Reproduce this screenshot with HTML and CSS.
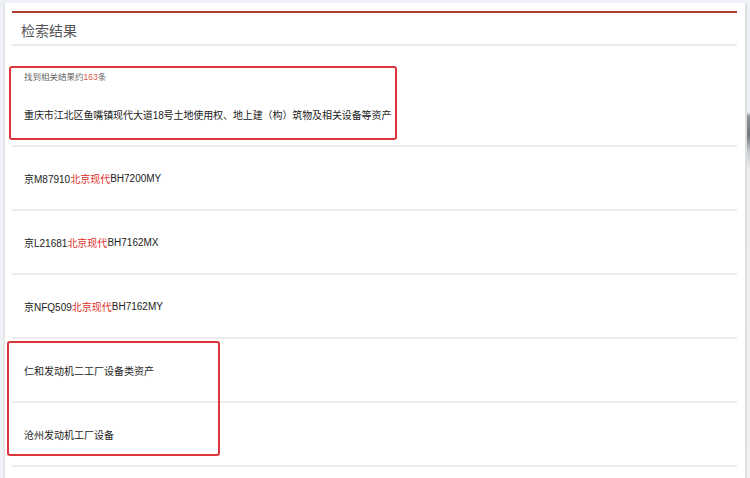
FILE: index.html
```html
<!DOCTYPE html>
<html lang="zh-CN">
<head>
<meta charset="utf-8">
<title>检索结果</title>
<link rel="stylesheet" href="styles.css">
</head>
<body>
<div class="page">
  <div class="panel">
    <div class="accent"></div>
    <div class="header">检索结果</div>
    <div class="summary">
      <div class="count">找到相关结果约<span class="num">163</span>条</div>
      <div class="item-text">重庆市江北区鱼嘴镇现代大道18号土地使用权、地上建（构）筑物及相关设备等资产</div>
    </div>
    <div class="row">京M87910<span class="hl">北京现代</span>BH7200MY</div>
    <div class="row">京L21681<span class="hl">北京现代</span>BH7162MX</div>
    <div class="row">京NFQ509<span class="hl">北京现代</span>BH7162MY</div>
    <div class="row">仁和发动机二工厂设备类资产</div>
    <div class="row">沧州发动机工厂设备</div>
    <div class="mark mark-one"></div>
    <div class="mark mark-two"></div>
  </div>
</div>
</body>
</html>
```
FILE: styles.css
```css
html, body {
  margin: 0;
  padding: 0;
}
body {
  width: 750px;
  height: 478px;
  overflow: hidden;
  font-family: "Liberation Sans", "Noto Sans CJK SC", sans-serif;
  color: #222;
  background:
    linear-gradient(to bottom, #eef2f7 0, #eef2f7 112px, #8d949c 116px, #6f767e 135px, #c9cdd2 152px, #eeeeee 170px, #f3f3f3 100%) right top / 3px 100% no-repeat,
    #eef2f6;
}
.page {
  padding-top: 3px;
  padding-left: 3px;
  display: flex;
}
.panel {
  position: relative;
  width: 744px;
  height: 475px;
  background: #fff;
  border-left: 2px solid #e4e6e8;
  border-right: 2px solid #dedede;
  padding: 0 8px 0 7px;
  box-sizing: border-box;
}
.accent {
  margin-top: 8px;
  height: 2px;
  background: #ad3d2c;
}
.header {
  height: 33px;
  padding-top: 3px;
  padding-left: 9px;
  box-sizing: border-box;
  display: flex;
  align-items: center;
  font-size: 14px;
  color: #555;
  border-bottom: 2px solid #ebebeb;
}
.summary {
  height: 101px;
  padding: 25px 0 0 12px;
  box-sizing: border-box;
  border-bottom: 2px solid #ebebeb;
}
.count {
  font-size: 8.5px;
  line-height: 12px;
  color: #666;
  margin-bottom: 26px;
}
.num {
  color: #e0574a;
}
.item-text {
  font-size: 10px;
  line-height: 14px;
  letter-spacing: -0.1px;
  color: #222;
}
.row {
  height: 64px;
  padding: 1px 0 0 12px;
  box-sizing: border-box;
  display: flex;
  align-items: center;
  font-size: 10px;
  color: #222;
  border-bottom: 2px solid #ebebeb;
}
.hl {
  color: #dd2e1f;
}
.mark {
  position: absolute;
  border: 2px solid #d9353b;
  border-radius: 3px;
  box-sizing: border-box;
}
.mark-one {
  left: 4px;
  top: 63px;
  width: 388px;
  height: 74px;
}
.mark-two {
  left: 2px;
  top: 338px;
  width: 213px;
  height: 115px;
}
```
